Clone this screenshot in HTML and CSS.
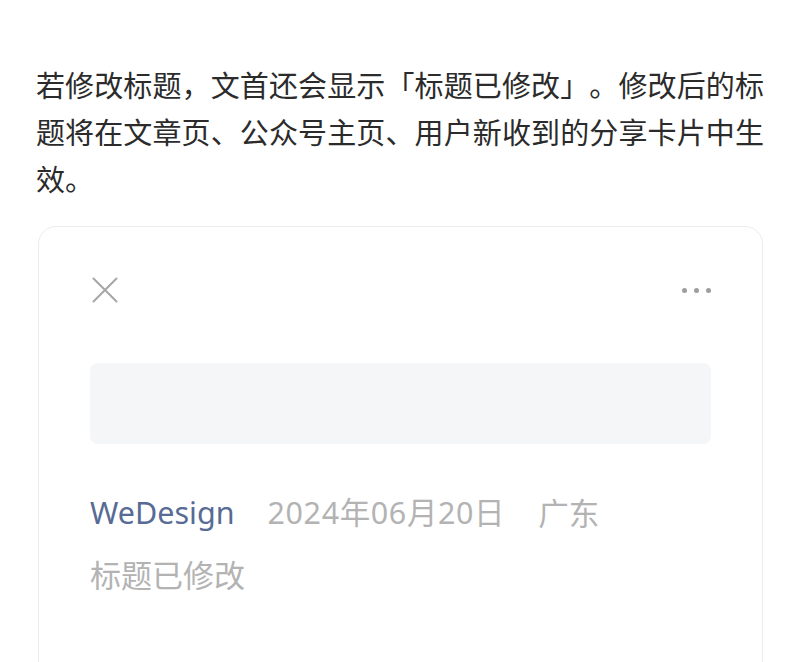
FILE: index.html
```html
<!DOCTYPE html>
<html lang="zh-CN">
<head>
<meta charset="utf-8">
<link rel="stylesheet" href="styles.css">
</head>
<body>
<p class="intro">若修改标题，文首还会显示「标题已修改」。修改后的标题将在文章页、公众号主页、用户新收到的分享卡片中生效。</p>
<div class="card">
  <div class="card-head">
    <svg class="close" width="26" height="26" viewBox="0 0 26 26"><path d="M1.5 1.5 L24.5 24.5 M24.5 1.5 L1.5 24.5" stroke="#a6a6a6" stroke-width="2" stroke-linecap="round" fill="none"/></svg>
    <div class="more"><span></span><span></span><span></span></div>
  </div>
  <div class="placeholder"></div>
  <div class="meta">
    <span class="author">WeDesign</span>
    <span class="date">2024年06月20日</span>
    <span class="loc">广东</span>
  </div>
  <div class="edited">标题已修改</div>
</div>
</body>
</html>
```
FILE: styles.css
```css
html, body {
  margin: 0;
  padding: 0;
  background: #ffffff;
  overflow: hidden;
}
body {
  font-family: "Noto Sans", "Noto Sans CJK SC", sans-serif;
  color: #333333;
}
.intro {
  margin: 61px 36px 0 36px;
  font-family: "Noto Sans CJK SC", sans-serif;
  font-size: 29px;
  line-height: 47px;
  text-align: justify;
  text-spacing-trim: space-all;
  color: #2b2b2b;
}
.card {
  margin: 24px 37px 0 38px;
  border: 1.5px solid #ececec;
  border-radius: 18px;
  padding: 50px 51px 120px 51px;
}
.card-head {
  display: flex;
  justify-content: space-between;
  align-items: center;
  height: 26px;
  padding-left: 2px;
}
.close {
  display: block;
}
.more {
  display: flex;
  gap: 7px;
  align-items: center;
}
.more span {
  width: 5px;
  height: 5px;
  border-radius: 50%;
  background: #9e9e9e;
}
.placeholder {
  margin-top: 60px;
  height: 81px;
  background: #f5f6f7;
  border-radius: 8px;
}
.meta {
  margin-top: 45px;
  display: flex;
  align-items: center;
  font-size: 30.5px;
  line-height: 47px;
  white-space: nowrap;
}
.author {
  color: #576b95;
  margin-right: 33px;
}
.date {
  color: #b3b3b3;
  margin-right: 33px;
  letter-spacing: 0.6px;
}
.loc {
  color: #b3b3b3;
  font-family: "Noto Sans CJK SC", sans-serif;
}
.edited {
  margin-top: 14px;
  font-family: "Noto Sans CJK SC", sans-serif;
  font-size: 31px;
  line-height: 47px;
  color: #b3b3b3;
}
```
